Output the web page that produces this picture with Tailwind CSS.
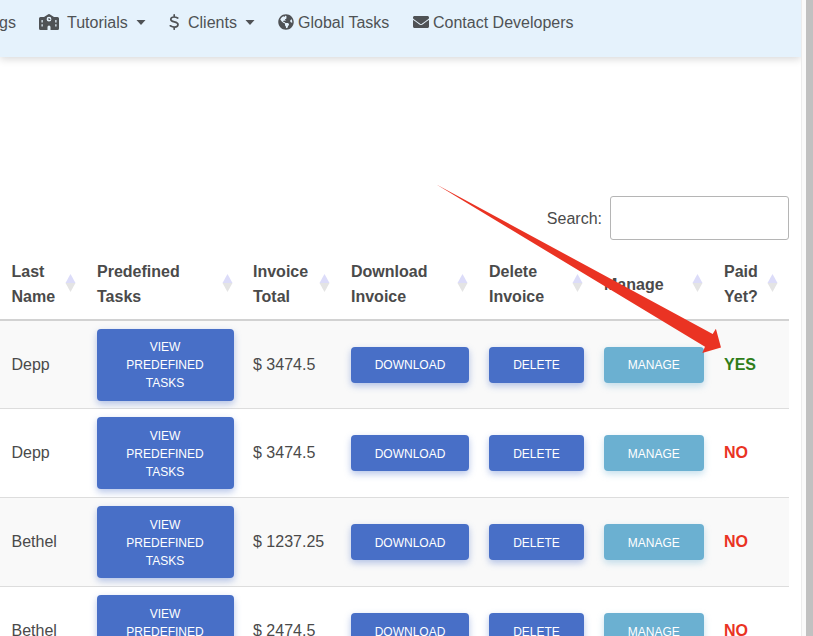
<!DOCTYPE html>
<html lang="en">
<head>
<meta charset="utf-8">
<title>Invoices</title>
<script src="https://cdn.jsdelivr.net/npm/@tailwindcss/browser@4"></script>
</head>
<body class="relative flex h-[636px] w-[813px] overflow-hidden bg-white font-['Liberation_Sans',Arial,sans-serif] text-base text-[#4a4a4a]">
<div class="flex h-[636px] w-[801px] shrink-0 flex-col overflow-hidden">
  <nav class="flex h-[57px] shrink-0 items-start bg-[#e5f2fc] pt-[11px] leading-6 whitespace-nowrap text-[#4f5255] shadow-[0_2px_8px_rgba(0,0,0,0.16)]">
    <a class="w-[39px] shrink-0 -indent-px">gs</a>
    <a class="flex w-[130px] shrink-0 items-center">
      <svg class="-mt-0.5 h-4 w-5" viewBox="0 0 640 512" fill="currentColor" fill-rule="evenodd"><path d="M298 8q22-14 44 0l138 88h112a48 48 0 0 1 48 48v320a48 48 0 0 1-48 48H368v-96a48 48 0 0 0-96 0v96H48a48 48 0 0 1-48-48V144a48 48 0 0 1 48-48h112zM80 192v80h40v-80zM520 192v80h40v-80zM80 328v72h40v-72zM520 328v72h40v-72zM320 90a76 76 0 1 0 0 152 76 76 0 0 0 0-152zm-16 34h32v36h26v30h-58z"/></svg>
      <span class="ml-2">Tutorials</span>
      <svg class="-mt-0.5 ml-2 h-[5px] w-[10px]" viewBox="0 0 10 5" fill="currentColor"><path d="M0.500 0h9L5 5z"/></svg>
    </a>
    <a class="flex w-[109px] shrink-0 items-center">
      <svg class="-mt-0.5 h-4 w-[10px]" viewBox="0 0 10 16" fill="none" stroke="currentColor" stroke-width="1.700" stroke-linecap="round"><path d="M5.200 .9v2M5.200 13.200v2M8.700 4C7 3.100 5.900 3 4.900 3 3 3 1.800 4 1.800 5.400c0 3.200 7.200 1.700 7.200 5.100 0 1.600-1.400 2.600-3.400 2.600-1.500 0-3-.5-4.300-1.300"/></svg>
      <span class="ml-[9px]">Clients</span>
      <svg class="-mt-0.5 ml-2 h-[5px] w-[10px]" viewBox="0 0 10 5" fill="currentColor"><path d="M0.500 0h9L5 5z"/></svg>
    </a>
    <a class="flex w-[135px] shrink-0 items-center">
      <svg class="-mt-0.5 size-4" viewBox="0 0 496 512" fill="currentColor"><path d="M248 8C111.03 8 0 119.03 0 256s111.03 248 248 248 248-111.03 248-248S384.97 8 248 8zm82.29 357.6c-3.9 3.88-7.99 7.95-11.31 11.28-2.99 3-5.1 6.7-6.17 10.71-1.51 5.66-2.73 11.38-4.77 16.87l-17.39 46.85c-13.76 3-28 4.69-42.65 4.69v-27.38c1.69-12.62-7.64-36.26-22.63-51.25-6-6-9.37-14.14-9.37-22.63v-32.01c0-11.64-6.27-22.34-16.46-27.97-14.37-7.95-34.81-19.06-48.81-26.11-11.48-5.78-22.1-13.14-31.65-21.75l-.8-.72a114.792 114.792 0 0 1-18.06-20.74c-9.38-13.77-24.66-36.42-34.59-51.14 20.47-45.5 57.36-82.04 103.2-101.89l24.01 12.01C203.48 89.74 216 82.01 216 70.11v-11.3c7.99-1.29 16.12-2.11 24.39-2.42l28.3 28.3c6.25 6.25 6.25 16.38 0 22.63L264 112l-10.34 10.34c-3.12 3.12-3.12 8.19 0 11.31l4.69 4.69c3.12 3.12 3.12 8.19 0 11.31l-8 8a8.008 8.008 0 0 1-5.66 2.34h-8.99c-2.08 0-4.08.81-5.58 2.27l-9.92 9.65a8.008 8.008 0 0 0-1.58 9.31l15.59 31.19c2.66 5.32-1.21 11.58-7.15 11.58h-5.64c-1.93 0-3.79-.7-5.24-1.96l-9.28-8.06a16.017 16.017 0 0 0-15.55-3.1l-31.17 10.39a11.95 11.95 0 0 0-8.17 11.34c0 4.53 2.56 8.66 6.61 10.69l11.08 5.54c9.41 4.71 19.79 7.16 30.31 7.16s22.59 27.29 32 32h66.75c8.49 0 16.62 3.37 22.63 9.37l13.69 13.69a30.503 30.503 0 0 1 8.93 21.57 46.536 46.536 0 0 1-13.72 32.98zM417 274.25c-5.79-1.45-10.84-5-14.15-9.97l-17.98-26.97a23.97 23.97 0 0 1 0-26.62l19.59-29.38c2.32-3.47 5.5-6.29 9.24-8.15l12.98-6.49C440.2 193.59 448 223.87 448 256c0 8.67-.74 17.16-1.82 25.54L417 274.25z"/></svg>
      <span class="ml-1">Global Tasks</span>
    </a>
    <a class="flex shrink-0 items-center">
      <svg class="-mt-0.5 size-4" viewBox="0 0 512 512" fill="currentColor"><path d="M502.3 190.8c3.9-3.1 9.7-.2 9.7 4.7V400c0 26.5-21.5 48-48 48H48c-26.5 0-48-21.5-48-48V195.6c0-5 5.7-7.8 9.7-4.7 22.4 17.4 52.1 39.5 154.1 113.6 21.1 15.4 56.7 47.8 92.2 47.6 35.7.3 72-32.8 92.3-47.6 102-74.1 131.6-96.3 154-113.7zM256 320c23.2.4 56.6-29.2 73.4-41.4 132.7-96.3 142.8-104.7 173.4-128.7 5.8-4.5 9.2-11.5 9.2-18.9v-19c0-26.5-21.5-48-48-48H48c-26.5 0-48 21.5-48 48v19c0 7.4 3.4 14.3 9.2 18.9 30.6 23.9 40.7 32.4 173.4 128.7 16.8 12.2 50.2 41.8 73.4 41.4z"/></svg>
      <span class="ml-1">Contact Developers</span>
    </a>
  </nav>
  <main class="flex w-[789px] flex-col pt-[139px]">
    <label class="flex h-11 items-center justify-end gap-2"><span class="pt-0.5">Search:</span><input class="h-11 w-[179px] rounded-[3px] border border-[#b5b5b5] bg-white"></label>
    <table class="mt-[11px] w-[789px] table-fixed border-separate border-spacing-0 text-left">
      <colgroup><col class="w-[87px]"><col class="w-[156px]"><col class="w-[98px]"><col class="w-[138px]"><col class="w-[115px]"><col class="w-[120px]"><col class="w-[75px]"></colgroup>
      <thead><tr id="head" class="h-[70px]"></tr></thead>
      <tbody id="rows"></tbody>
    </table>
  </main>
</div>
<div class="h-full w-[5px] shrink-0 border-l border-[#ececec] bg-[#fafafa]"></div>
<div class="h-full grow bg-[#c1c1c1]"></div>
<svg class="absolute top-0 left-0 h-[636px] w-[813px]" viewBox="0 0 813 636" fill="#ea3323"><path d="M436 184.300L712.700 334L715.900 328.800L721 347.400L702.300 352.900L705 346.700Z"/></svg>
<script>
const sort = '<svg class="-mt-0.5 h-[18px] w-[11px] shrink-0" viewBox="0 0 11 18"><path fill="#dcdcf9" d="M5.500 0L10.500 9H.5z"/><path fill="#e4e4e4" d="M.5 9h10L5.500 18z"/></svg>';
const cols = [['Last<br>Name','pl-[11.500px] pr-[11px]'],['Predefined<br>Tasks','pl-2.5 pr-[10px]'],['Invoice<br>Total','pl-2.5 pr-[11px]'],['Download<br>Invoice','pl-2.5 pr-[11px]'],['Delete<br>Invoice','pl-2.5 pr-[11px]'],['Manage','pl-2.5 pr-[11px]'],['Paid<br>Yet?','pl-2.5 pr-[11px]']];
document.getElementById('head').innerHTML = cols.map(([t, p]) => `<th class="border-b-2 border-[#d2d2d2] p-0 align-top leading-[25px] font-bold"><div class="flex h-[66px] items-center justify-between ${p}"><span>${t}</span>${sort}</div></th>`).join('');
const blue = 'bg-[#486fc7] shadow-[0_3px_7px_rgba(72,111,199,0.4)]', teal = 'bg-[#6bb0d1] shadow-[0_3px_7px_rgba(107,176,209,0.4)]';
const btn = (t, c, w, p) => `<button class="block rounded-[4px] text-center text-xs leading-[18px] text-white ${p} ${c} ${w}">${t}</button>`;
const data = [['Depp','$ 3474.5',1],['Depp','$ 3474.5',0],['Bethel','$ 1237.25',0],['Bethel','$ 2474.5',0]];
document.getElementById('rows').innerHTML = data.map(([n, v, paid], i) => {
  const p = i ? 'pt-2.5 pb-2' : 'py-[9px]';
  const cells = [n, btn('VIEW<br>PREDEFINED<br>TASKS', blue, 'w-[137px]', p), v, btn('DOWNLOAD', blue, 'w-[118px]', p), btn('DELETE', blue, 'w-[95px]', p), btn('MANAGE', teal, 'w-[99.500px]', p), `<b class="${paid ? 'text-[#2f7d1a]' : 'text-[#ea3323]'}">${paid ? 'YES' : 'NO'}</b>`];
  return `<tr class="${i ? 'h-[89px]' : 'h-[88px]'} ${i % 2 ? 'bg-white' : 'bg-[#f9f9f9]'}">` + cells.map((c, j) => `<td class="border-b border-[#dddddd] p-0 align-middle ${j === 0 ? 'pl-[11.500px]' : j === 1 ? 'pl-[9.500px]' : 'pl-2.5'}">${c}</td>`).join('') + '</tr>';
}).join('');
</script>
</body>
</html>
